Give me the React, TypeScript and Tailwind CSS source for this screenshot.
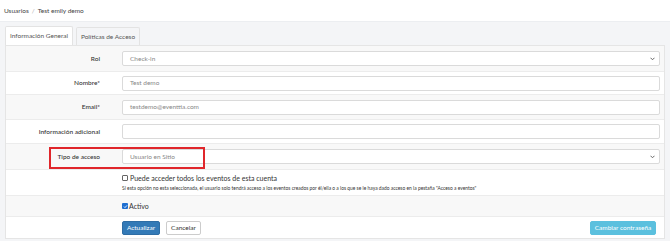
import React from "react";

function Chevron() {
  return (
    <svg width="5" height="4" viewBox="0 0 10 8" className="absolute right-[4px] top-1/2 -translate-y-1/2">
      <path d="M1 1.5l4 4 4-4" fill="none" stroke="#666" strokeWidth="2" />
    </svg>
  );
}

function Row({ label, gray, children, h = "h-[24px]" }: { label?: string; gray?: boolean; children: React.ReactNode; h?: string }) {
  return (
    <div className={`flex items-center ${h} border-b border-[#ececec] ${gray ? "bg-[#f8f8f8]" : "bg-white"}`}>
      <div className="w-[94px] shrink-0 text-right text-[6.5px] font-medium text-[#333]">{label}</div>
      <div className="ml-[22px] mr-[4px] flex-1">{children}</div>
    </div>
  );
}

function Input({ value, select }: { value?: string; select?: boolean }) {
  return (
    <div className="relative flex h-[15px] items-center rounded-[2px] border border-[#dadada] bg-white pl-[7px] text-[6.5px] text-[#888]">
      {value}
      {select && <Chevron />}
    </div>
  );
}

export default function App() {
  return (
    <div className="h-[241px] w-[670px] overflow-hidden bg-white text-[#333]" style={{ fontFamily: "Lato, 'Open Sans', sans-serif" }}>
      <div className="flex h-[21px] items-center pl-[4px] text-[6.5px] text-[#444]">
        <span>Usuarios</span>
        <span className="mx-[3px] text-[#aaa]">/</span>
        <span>Test emily demo</span>
      </div>
      <div className="h-[220px] border-t border-[#eceef1] bg-[#f4f5f7] px-[5px] pt-[4px]">
        <div className="flex h-[19px] items-end">
          <div className="flex h-[19px] w-[68px] items-center justify-center rounded-t-[2px] border border-b-0 border-[#e3e3e3] bg-white text-[6.5px] text-[#555]">
            Información General
          </div>
          <div className="ml-[3px] flex h-[18px] w-[64px] items-center justify-center rounded-t-[2px] border border-b-0 border-[#e3e3e3] bg-[#f4f5f7] text-[6.5px] text-[#555]">
            Políticas de Acceso
          </div>
        </div>
        <div className="h-[194px] border border-[#e5e5e5] bg-white">
          <Row label="Rol" gray h="h-[26px]">
            <Input value="Check-in" select />
          </Row>
          <Row label="Nombre*" h="h-[23px]">
            <Input value="Test demo" />
          </Row>
          <Row label="Email*" gray h="h-[25px]">
            <Input value="testdemo@eventtia.com" />
          </Row>
          <Row label="Información adicional" h="h-[24px]">
            <Input />
          </Row>
          <div className="relative">
            <Row label="Tipo de acceso" gray h="h-[26px]">
              <Input value="Usuario en Sitio" select />
            </Row>
            <div className="pointer-events-none absolute left-[43px] top-[3px] h-[22px] w-[156px] border-2 border-[#e0262b]" />
          </div>
          <Row h="h-[26px]">
            <div className="flex flex-col">
              <div className="flex items-center text-[7px] text-[#333]">
                <span className="mr-[2px] inline-block h-[6px] w-[6px] rounded-[1px] border border-[#666] bg-white" />
                Puede acceder todos los eventos de esta cuenta
              </div>
              <div className="mt-[1px] whitespace-nowrap text-[4.9px] text-[#333]">
                Si esta opción no esta seleccionada, el usuario solo tendrá acceso a los eventos creados por él/ella o a los que se le haya dado acceso en la pestaña "Acceso a eventos"
              </div>
            </div>
          </Row>
          <Row gray h="h-[21px]">
            <div className="flex items-center text-[7px] text-[#333]">
              <span className="mr-[1px] flex h-[6px] w-[6px] items-center justify-center rounded-[1px] bg-[#1f6fd1]">
                <svg width="5" height="5" viewBox="0 0 10 10">
                  <path d="M2 5.2l2 2L8 2.8" fill="none" stroke="white" strokeWidth="1.8" />
                </svg>
              </span>
              Activo
            </div>
          </Row>
          <div className="flex h-[22px] items-center pl-[116px] pr-[8px]">
            <div className="flex h-[14px] w-[38px] items-center justify-center rounded-[2px] border border-[#2e6da4] bg-[#337ab7] text-[6.5px] text-white">
              Actualizar
            </div>
            <div className="ml-[6px] flex h-[14px] w-[35px] items-center justify-center rounded-[2px] border border-[#ccc] bg-white text-[6.5px] text-[#333]">
              Cancelar
            </div>
            <div className="ml-auto flex h-[14px] w-[66px] items-center justify-center rounded-[2px] border border-[#5bc0de] bg-[#5bc0de] text-[6.5px] text-white">
              Cambiar contraseña
            </div>
          </div>
        </div>
      </div>
    </div>
  );
}
